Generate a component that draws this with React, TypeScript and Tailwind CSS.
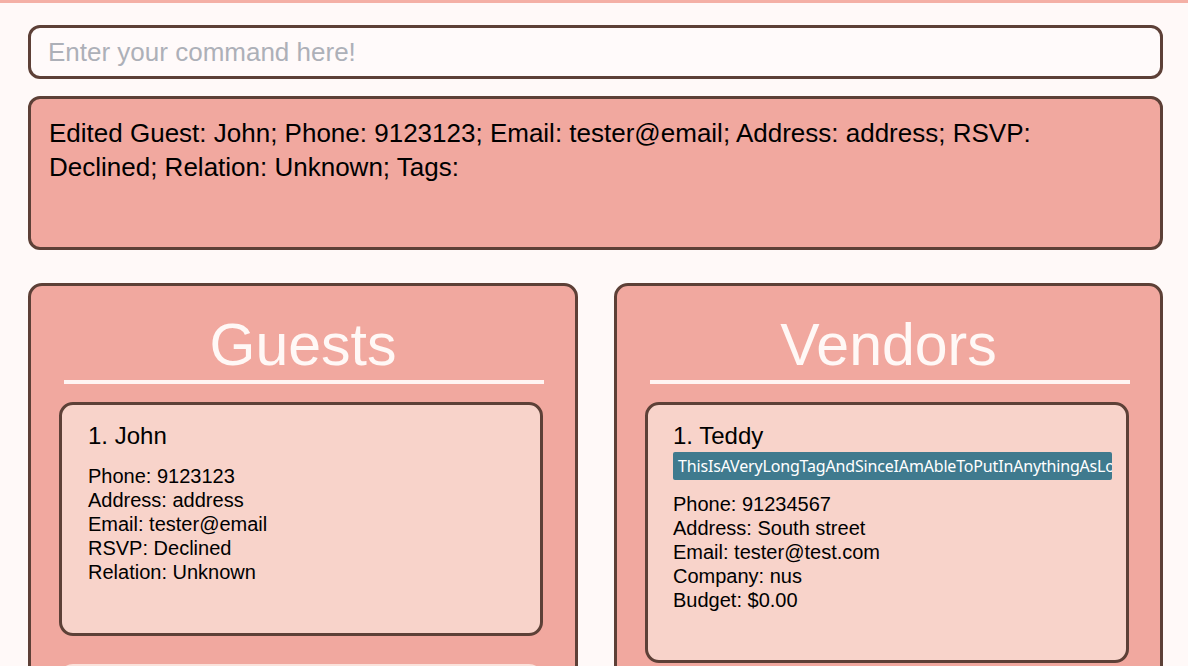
import React from "react";

const font = { fontFamily: '"Liberation Sans", Arial, sans-serif' };

function Line({ children }: { children: React.ReactNode }) {
  return <div className="text-[20px] leading-[24px] text-black whitespace-nowrap">{children}</div>;
}

export default function App() {
  return (
    <div
      className="w-[1188px] h-[666px] overflow-hidden bg-[#fff9f8] border-t-[3px] border-[#f4b0a6] flex flex-col pl-[28px] pr-[25px]"
      style={font}
    >
      <div className="mt-[22px] h-[54px] shrink-0 rounded-[12px] border-[3px] border-[#5d4037] bg-[#fffafa] flex items-center pl-[17px]">
        <span className="text-[26px] text-[#adb0b8]">Enter your command here!</span>
      </div>

      <div className="mt-[17px] h-[154px] shrink-0 rounded-[12px] border-[3px] border-[#5d4037] bg-[#f1a89f] pt-[17px] pl-[18px] pr-[20px]">
        <p className="text-[26px] leading-[34px] text-black whitespace-nowrap">
          Edited Guest: John; Phone: 9123123; Email: tester@email; Address: address; RSVP:
          <br />
          Declined; Relation: Unknown; Tags:
        </p>
      </div>

      <div className="mt-[33px] grid grid-cols-[550px_549px] gap-[36px] shrink-0">
        <div className="h-[420px] overflow-hidden rounded-[14px] border-[3px] border-[#5d4037] bg-[#f1a89f] flex flex-col">
          <div className="h-[94px] shrink-0 flex items-end justify-center">
            <span className="text-[59px] leading-[70px] text-[#fff8f6]">Guests</span>
          </div>
          <div className="ml-[33px] w-[480px] h-[4px] shrink-0 bg-[#fff5f3]"></div>
          <div className="ml-[28px] mt-[18px] w-[484px] h-[234px] shrink-0 rounded-[14px] border-[3px] border-[#5d4037] bg-[#f8d3ca] pl-[26px] pt-[17px]">
            <div className="text-[24px] leading-[28px] text-black">1. John</div>
            <div className="mt-[14px]">
              <Line>Phone: 9123123</Line>
              <Line>Address: address</Line>
              <Line>Email: tester@email</Line>
              <Line>RSVP: Declined</Line>
              <Line>Relation: Unknown</Line>
            </div>
          </div>
          <div className="ml-[28px] mt-[28px] w-[484px] h-[200px] shrink-0 rounded-[14px] border-[3px] border-[#fbe3dc] bg-[#f8d6cd]"></div>
        </div>

        <div className="h-[420px] overflow-hidden rounded-[14px] border-[3px] border-[#5d4037] bg-[#f1a89f] flex flex-col">
          <div className="h-[94px] shrink-0 flex items-end justify-center">
            <span className="text-[59px] leading-[70px] text-[#fff8f6]">Vendors</span>
          </div>
          <div className="ml-[33px] w-[480px] h-[4px] shrink-0 bg-[#fff5f3]"></div>
          <div className="ml-[28px] mt-[18px] w-[484px] h-[261px] shrink-0 rounded-[14px] border-[3px] border-[#5d4037] bg-[#f8d3ca] pl-[25px] pt-[17px]">
            <div className="text-[24px] leading-[28px] text-black">1. Teddy</div>
            <div className="mt-[2px] w-[439px] h-[28px] bg-[#3f7a8e] rounded-[2px] overflow-hidden pl-[5px] flex items-center">
              <span
                className="text-[16px] leading-[20px] text-white whitespace-nowrap"
                style={{ fontFamily: '"Noto Sans", "Open Sans", sans-serif', letterSpacing: "-0.17px" }}
              >
                ThisIsAVeryLongTagAndSinceIAmAbleToPutInAnythingAsLongAsItIsAlphanumeric
              </span>
            </div>
            <div className="mt-[12px]">
              <Line>Phone: 91234567</Line>
              <Line>Address: South street</Line>
              <Line>Email: tester@test.com</Line>
              <Line>Company: nus</Line>
              <Line>Budget: $0.00</Line>
            </div>
          </div>
        </div>
      </div>
    </div>
  );
}
